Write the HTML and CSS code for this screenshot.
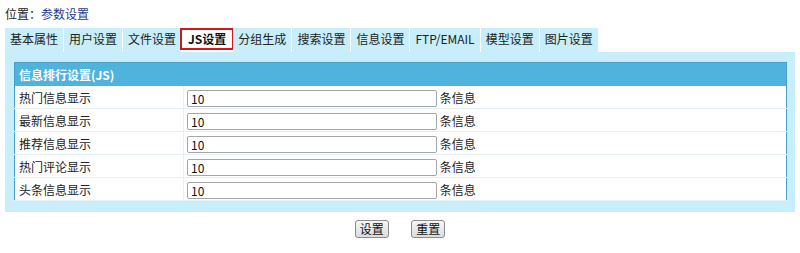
FILE: index.html
```html
<!DOCTYPE html>
<html lang="zh-CN">
<head>
    <meta charset="UTF-8">
    <title>参数设置</title>
    <link rel="stylesheet" href="styles.css">
</head>
<body>
    <div class="position">位置：<a href="#">参数设置</a></div>

    <ul class="tabs">
        <li>基本属性</li>
        <li>用户设置</li>
        <li>文件设置</li>
        <li class="active">JS设置</li>
        <li>分组生成</li>
        <li>搜索设置</li>
        <li>信息设置</li>
        <li>FTP/EMAIL</li>
        <li>模型设置</li>
        <li>图片设置</li>
    </ul>

    <div class="panel">
        <table class="form-table">
            <tr class="header">
                <td colspan="2">信息排行设置(JS)</td>
            </tr>
            <tr>
                <td class="label">热门信息显示</td>
                <td><input type="text" value="10"> <span class="unit">条信息</span></td>
            </tr>
            <tr>
                <td class="label">最新信息显示</td>
                <td><input type="text" value="10"> <span class="unit">条信息</span></td>
            </tr>
            <tr>
                <td class="label">推荐信息显示</td>
                <td><input type="text" value="10"> <span class="unit">条信息</span></td>
            </tr>
            <tr>
                <td class="label">热门评论显示</td>
                <td><input type="text" value="10"> <span class="unit">条信息</span></td>
            </tr>
            <tr>
                <td class="label">头条信息显示</td>
                <td><input type="text" value="10"> <span class="unit">条信息</span></td>
            </tr>
        </table>
    </div>

    <div class="buttons">
        <input type="submit" value="设置">
        <input type="reset" value="重置">
    </div>
</body>
</html>
```

FILE: styles.css
```css
/* 参数设置页面 */
body {
    margin: 0;
    padding: 6px 5px;
    font-family: "Noto Sans CJK SC", "Noto Sans", sans-serif;
    font-size: 12px;
    color: #222;
    background-color: #fff;
}
.position {
    height: 16px;
    line-height: 16px;
}
.position a {
    color: #1c3b8c;
    text-decoration: none;
}
.tabs {
    display: flex;
    list-style: none;
    margin: 6px 0 0;
    padding: 0;
}
.tabs li {
    height: 24px;
    line-height: 22px;
    padding: 0 5px;
    margin-right: 1px;
    background-color: #c8eefb;
    white-space: nowrap;
}
.tabs li.active {
    height: 18px;
    line-height: 17px;
    padding: 0 6px;
    margin-left: -2px;
    margin-right: -1px;
    border: 2px solid #d4161c;
    background-color: #fff;
    font-weight: bold;
    color: #111;
}
.panel {
    width: 790px;
    padding: 10px 8px 11px 9px;
    box-sizing: border-box;
    background-color: #c8eefb;
}
.form-table {
    width: 100%;
    border-collapse: collapse;
    border: 1px solid #4a9fc6;
    background-color: #fff;
}
.form-table td {
    height: 22px;
    padding: 0 3px;
    border-bottom: 1px solid #e3f1f4;
    vertical-align: middle;
}
.form-table .header td {
    height: 23px;
    padding-left: 4px;
    background-color: #4fb3dd;
    color: #fff;
    font-weight: bold;
    border-bottom: none;
}
.form-table td.label {
    width: 161px;
    padding-left: 4px;
    border-right: 1px solid #e3f1f4;
}
.form-table input[type="text"] {
    width: 250px;
    height: 17px;
    padding: 0 3px;
    margin: 0;
    border: 1px solid #a5a5a5;
    border-radius: 2px;
    box-sizing: border-box;
    font-family: inherit;
    font-size: 12px;
    color: #111;
    vertical-align: middle;
}
.unit {
    vertical-align: middle;
}
.buttons {
    margin-top: 8px;
    text-align: center;
}
.buttons input {
    height: 18px;
    padding: 0 4px;
    margin: 0 10px;
    border: 1px solid #8b8b8b;
    border-radius: 3px;
    background: linear-gradient(#f6f6f6, #dcdcdc);
    font-family: inherit;
    font-size: 12px;
    color: #111;
    line-height: 14px;
}
```
